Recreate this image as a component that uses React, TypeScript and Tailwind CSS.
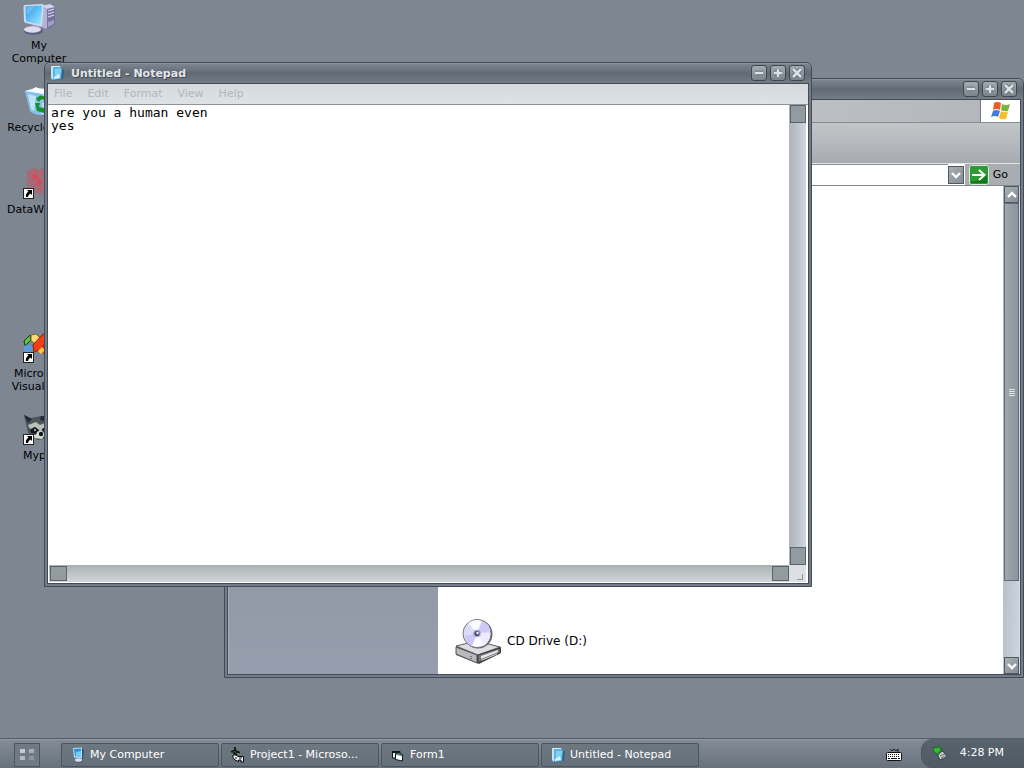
import React, { useState } from "react";

const raised =
  "flex shrink-0 items-center justify-center border border-[#505862] bg-linear-to-br from-[#a9b0b5] to-[#858e95]";

function ComputerIcon() {
  return (
    <svg viewBox="0 0 32 32" className="size-8" aria-hidden="true">
      <defs>
        <linearGradient id="screen" x1="0" y1="0" x2="1" y2="1">
          <stop offset="0" stopColor="#2f8fe6" />
          <stop offset="0.55" stopColor="#67c6fa" />
          <stop offset="1" stopColor="#a5e8ff" />
        </linearGradient>
      </defs>
      <path d="M18 3 L27 1 L32 4 V22 L24 27 L18 24 Z" fill="#74729c" />
      <path d="M18 3 L27 1 L32 4 L24 6 Z" fill="#d2d2e8" />
      <path d="M18 4 L24 6 V26 L18 24 Z" fill="#b5b4d2" />
      <path d="M25 8 L31 6 M25 11 L31 9 M25 14 L31 12" stroke="#dcdcf2" strokeWidth="1.3" />
      <path d="M25 19 L31 17 V21 L25 24 Z" fill="#a09ec2" />
      <path d="M9 21 L16 23 L15 27 L9 26 Z" fill="#8f8eb4" />
      <ellipse cx="10.500" cy="28" rx="9.500" ry="3.800" fill="#5d5b80" />
      <ellipse cx="9.500" cy="26.500" rx="8.500" ry="3.200" fill="#dcdcee" />
      <path d="M2 2 L19 1 Q21 1 21 3 L19 22 Q19 24 17 23.500 L3 20 Q1 19.500 1 18 L0.500 4 Q0.500 2 2 2Z" fill="#c9dcf2" />
      <path d="M2.500 3.500 L19 2.500 L17.500 21.500 L3 18.500 Z" fill="url(#screen)" />
      <path d="M3 4 L12 3.500 L4 12 Z" fill="#8fd0f8" opacity=".55" />
    </svg>
  );
}

function SmallComputerIcon() {
  return (
    <svg viewBox="0 0 16 16" className="size-4" aria-hidden="true">
      <path d="M12 1 L14 3 L13 11 L11 12 Z" fill="#34506e" />
      <ellipse cx="9" cy="13.500" rx="4" ry="2.200" fill="#4d5478" />
      <ellipse cx="8.500" cy="13" rx="3.600" ry="1.800" fill="#dcdff2" />
      <path d="M3 1 L12 0.500 L12 11.500 L4 10.500 Z" fill="#b6dbf4" />
      <path d="M4 2 L11 1.500 L11 10 L5 9 Z" fill="#2f93dc" />
      <path d="M6 5 L11 4 L11 10 L6 9 Z" fill="#74cdf8" />
    </svg>
  );
}

function RecycleIcon() {
  return (
    <svg viewBox="0 0 32 32" className="size-8" aria-hidden="true">
      <path d="M2 6 L13 3 L30 5 L26 28 Q20 32 8 27 Z" fill="#b6dcf5" />
      <path d="M2 6 L20 9 L18 30 Q11 30 7 26 Z" fill="#86bfec" />
      <path d="M5 9 L13 11 L11 26 L8 24 Z" fill="#d9f2ff" opacity=".7" />
      <path d="M2 6 L13 3 L30 5 L20 9 Z" fill="#e8f8ff" />
      <path d="M8 5 L13 2 L18 5 L22 3 L25 6 L19 8 Z" fill="#fff" />
      <path d="M13 14 Q17 8 22 12 L23 10 L26 15 L20 17 L21 15 Q18 13 16 17Z M12 18 L17 18 L16 22 L21 23 V28 L14 26Z M26 17 L28 22 L24 26 V28 L21 25 L24 21 V23 L25 21Z" fill="#15912a" />
    </svg>
  );
}

function DataIcon() {
  return (
    <svg viewBox="0 0 32 32" className="size-8" aria-hidden="true">
      <path d="M4 4 L11 1 L15 3 L20 1 L27 4 L30 14 L26 25 L18 29 L11 26 L7 21 L3 19 Z" fill="#93747f" />
      <g stroke="#c25c6a" strokeWidth="1.6" fill="none">
        <path d="M5 6 L14 2 M4 10 L18 5 M6 15 L20 8 M9 20 L22 12 M12 25 L26 16" />
        <path d="M10 2 L12 8 M14 6 L16 14 M9 10 L12 18 M18 2 L22 12 M16 15 L19 24" />
      </g>
      <path d="M11 6 L14 9 L12 13 L9 11Z M16 12 L20 15 L17 19 L13 16Z" fill="#d9485c" />
    </svg>
  );
}

function StudioIcon() {
  return (
    <svg viewBox="0 0 32 32" className="size-8" aria-hidden="true">
      <path d="M1 10 L7 4 L8 9 L2 15 Z" fill="#52c634" stroke="#202c20" />
      <path d="M8 4 L13 3 L17 7 L13 13 L8 10 Z" fill="#ffd872" stroke="#7b672a" />
      <path d="M1 15 L6 13 L10 16 L6 23 L1 20Z" fill="#5a9be0" />
      <path d="M10 14 L20 3 L28 4 L17 19 L11 21 Z" fill="#f23e16" stroke="#84240f" />
      <path d="M17 19 L28 4 L31 10 L21 23 Z" fill="#d7260f" />
      <path d="M15 20 L18 23 L22 19 L19 16Z" fill="#ffc83c" />
    </svg>
  );
}

function RaccoonIcon() {
  return (
    <svg viewBox="0 0 32 32" className="size-8" aria-hidden="true">
      <path d="M1 2 L8 5 L18 3 L26 3 L31 1 L30 15 L25 25 L15 27 L5 20 Z" fill="#4c5558" />
      <path d="M1 2 L9 6 L5 10 Z M18 3 L30 4 L25 9 L17 7Z" fill="#202b36" />
      <path d="M5 12 L13 9 L17 12 L24 9 L29 13 L22 14 L17 18 L12 14 L7 16Z" fill="#b9c0b5" />
      <path d="M7 17 L12 14 L16 17 L13 21 L8 20Z M19 16 L24 13 L27 17 L22 21Z" fill="#13191c" />
      <path d="M14 19 L18 17 L22 21 L19 26 L12 25 L8 21 L13 22Z" fill="#d8ddd4" />
      <circle cx="18" cy="21" r="2.200" fill="#141414" />
      <circle cx="12" cy="17" r="1" fill="#cdd6dc" />
    </svg>
  );
}

function NotepadIcon() {
  return (
    <svg viewBox="0 0 16 16" className="size-4" aria-hidden="true">
      <path d="M12 3 L15 5 L14 14 L4 15.500 L3 14 Z" fill="#2d6183" />
      <path d="M2 1 L11 1 L13 4 L12 14 L4 15 L2 13 Z" fill="#5bb4e4" />
      <path d="M2 1 L4 2 L4 15 L2 13 Z" fill="#c2e6f8" />
      <path d="M6 4 L12 4 L11 11 L6 12 Z" fill="#82d0f4" />
      <path d="M5 12 L10 9 L11 13 L5 14Z" fill="#d4f3fc" />
      <path d="M3 1.500 H11" stroke="#d2effb" />
    </svg>
  );
}

function FlagIcon() {
  return (
    <svg viewBox="0 0 20 20" className="size-5" aria-hidden="true">
      <path d="M3 2 Q6 0 10 2 L9 9 Q5 7 2 9Z" fill="#ec5b2a" />
      <path d="M11 3 Q15 5 19 3 L17 10 Q13 11 10 9Z" fill="#79b43c" />
      <path d="M2 10 Q5 8 9 10 L7 16 Q4 14 0 16Z" fill="#3c7ed8" />
      <path d="M10 10 Q13 12 17 11 L15 18 Q11 19 8 17Z" fill="#f5bd26" />
    </svg>
  );
}

function CdDriveIcon() {
  return (
    <svg viewBox="0 0 48 48" className="size-12" aria-hidden="true">
      <path d="M2 29 L23 24 L47 30 V36 L25 47 L2 38 Z" fill="#55565a" />
      <path d="M2 29 L23 24 L46 30 L24 38 Z" fill="#dededf" stroke="#66676a" />
      <path d="M2 30 L23 38 V46 L2 37 Z" fill="#b8b9bb" stroke="#55565a" />
      <path d="M24 38 L46 31 V36 L24 46 Z" fill="#77787b" stroke="#37383b" />
      <path d="M27 39 L44 33 V35 L27 42 Z" fill="#e7e7e9" />
      <path d="M28 43 L43 37" stroke="#d5d5d8" />
      <path d="M17 39 V42" stroke="#333" strokeDasharray="1 1" />
      <circle cx="24" cy="17" r="14.500" fill="#66666e" />
      <circle cx="23" cy="16.500" r="14" fill="#dddcf8" stroke="#77767f" />
      <path d="M23 16.500 L14 6 Q21 1 28 4 Z M23 16.500 L31 28 Q25 31 18 29 Z" fill="#fbfbff" />
      <path d="M23 16.500 L28 4 Q35 6 36.500 14 Z M23 16.500 L18 29 Q11 26 10 19 Z" fill="#cdc9f8" />
      <path d="M23 16.500 L36.500 16 Q36 24 31 28Z" fill="#edecff" />
      <circle cx="23" cy="16.500" r="3.800" fill="#aaa8d0" />
      <circle cx="23" cy="16.500" r="2.500" fill="#4b4973" />
      <circle cx="23.500" cy="16" r="1.200" fill="#fff" />
    </svg>
  );
}

function ProjectIcon() {
  return (
    <svg viewBox="0 0 16 16" className="size-4" aria-hidden="true">
      <path d="M1 5 L5 3 L7 5 L10 5 M3 5 L7 8 M5 0 V4" fill="none" stroke="#0d1916" strokeWidth="1.800" />
      <path d="M6 2 L7 3 M9 4 L11 5" stroke="#2d8c55" />
      <path d="M3 8 L6 8 L8 9.500 H13.500 V15 H11 V13 H8.500 V14.500 L5 13 L3 11 Z" fill="#f2f2f2" stroke="#0c0c0c" />
      <path d="M9 11 H12 M6 10 V12" stroke="#111" />
    </svg>
  );
}

function FormIcon() {
  return (
    <svg viewBox="0 0 16 16" className="size-4" aria-hidden="true">
      <path d="M2.500 4.500 L10 4.500 V11 L2.500 11 Z" fill="#e8eef0" stroke="#101820" />
      <path d="M2 4 L10 4 V6 H2Z" fill="#101820" />
      <path d="M5.500 6.500 L12.500 7.500 V14 L5.500 12.500 Z" fill="#fff" stroke="#101820" />
      <path d="M6 7.500 L12 8.500" stroke="#3b7f90" />
    </svg>
  );
}

function Chevron({ up = false }: { up?: boolean }) {
  return (
    <svg viewBox="0 0 10 8" className="h-2 w-2.5" aria-hidden="true">
      <path d={up ? "M1 6 L5 2 L9 6" : "M1 2 L5 6 L9 2"} fill="none" stroke="#fff" strokeWidth="2.400" />
    </svg>
  );
}

function CaptionButtons() {
  const marks = [
    { label: "Minimize", d: "M4 8 H12" },
    { label: "Maximize", d: "M4 8 H12 M8 4 V12" },
    { label: "Close", d: "M4 4 L12 12 M12 4 L4 12" },
  ];
  return (
    <div className="flex gap-[3px]">
      {marks.map((m) => (
        <button
          key={m.label}
          aria-label={m.label}
          className="size-4 rounded-[3px] border border-[#3f4750] bg-linear-to-b from-[#a5abb1] to-[#7b838b]"
        >
          <svg viewBox="1 1 14 14" className="size-full" aria-hidden="true">
            <path d={m.d} stroke="#666e77" strokeWidth="4.500" />
            <path d={m.d} stroke="#dde1e4" strokeWidth="2.500" />
          </svg>
        </button>
      ))}
    </div>
  );
}

function Frame({
  label,
  title,
  className,
  children,
}: {
  label: string;
  title?: React.ReactNode;
  className: string;
  children: React.ReactNode;
}) {
  return (
    <section
      aria-label={label}
      className={`absolute flex flex-col rounded-t-md border border-[#434b57] bg-[#737c88] ${className}`}
    >
      <header className="flex h-5 shrink-0 items-center justify-between rounded-t-[5px] border-t border-[#8c959f] bg-linear-to-b from-[#7c858f] via-[#626a73] to-[#747c85] pr-1.5 pb-px pl-1">
        <div className="flex items-center gap-1.5">{title}</div>
        <CaptionButtons />
      </header>
      <div className="mx-0.5 mb-0.5 flex min-h-0 flex-1 flex-col border border-[#434b57]">{children}</div>
    </section>
  );
}

function Explorer() {
  return (
    <Frame label="My Computer" className="top-[78px] right-0 bottom-[60px] left-56">
      <div className="flex h-[23px] shrink-0 border-b border-[#858b90] bg-linear-to-r from-[#bfc4c7] via-[#c4c8cb] to-[#b2b6ba]">
        <div className="flex-1" />
        <div className="flex w-10 items-center justify-center border-l border-[#737a80] bg-white">
          <FlagIcon />
        </div>
      </div>
      <div className="h-[41px] shrink-0 border-b border-[#e2e4e5] bg-linear-to-b from-[#c3c6c9] to-[#a7abb0]" />
      <div className="flex h-[22px] shrink-0 items-center border-b border-[#82888d] bg-[#a9adb1] pr-3">
        <input aria-label="Address" className="h-full min-w-0 flex-1 border-t border-[#888e94] bg-white px-1 outline-none" />
        <div className="flex h-full items-center bg-white pr-px">
          <button aria-label="Show addresses" className={`${raised} h-[18px] w-4`}>
            <Chevron />
          </button>
        </div>
        <button className="ml-1 flex items-center gap-1">
          <svg viewBox="0 0 20 20" className="size-5" aria-hidden="true">
            <rect x="0.500" y="0.500" width="19" height="19" rx="2" fill="#2c9b36" stroke="#dcebdc" />
            <path d="M2 18 H18 V10 Q11 17 2 16Z" fill="#13791f" />
            <path d="M3 10 H15 M10 5 L15.500 10 L10 15" fill="none" stroke="#fff" strokeWidth="2" />
          </svg>
          Go
        </button>
      </div>
      <div className="flex min-h-0 flex-1 bg-white">
        <aside className="w-[210px] shrink-0 border-l border-[#a5acb8] bg-linear-to-b from-[#7e8693] to-[#969dac]" />
        <main className="flex min-w-0 flex-1 flex-col justify-end px-4 pb-[9px]">
          <button className="flex items-center gap-[5px] self-start text-xs">
            <CdDriveIcon />
            CD Drive (D:)
          </button>
        </main>
        <div className="flex w-[17px] shrink-0 flex-col border-r border-[#d5dade] bg-linear-to-br from-[#adb2b5] to-[#ced5df] pl-px">
          <button aria-label="Scroll up" className={`${raised} h-[17px]`}>
            <Chevron up />
          </button>
          <div className="flex h-[378px] flex-col items-center justify-center gap-px border border-[#626b74] bg-linear-to-r from-[#a0a8ad] to-[#8b949d]">
            <span className="h-px w-1.5 bg-[#e1e5e8]" />
            <span className="h-px w-1.5 bg-[#e1e5e8]" />
            <span className="h-px w-1.5 bg-[#e1e5e8]" />
            <span className="h-px w-1.5 bg-[#e1e5e8]" />
          </div>
          <div className="flex-1" />
          <button aria-label="Scroll down" className={`${raised} h-[17px]`}>
            <Chevron />
          </button>
        </div>
      </div>
    </Frame>
  );
}

function Notepad() {
  const [text, setText] = useState("are you a human even\nyes");
  const thumb = "h-[18px] w-4 shrink-0 border border-[#59636a] bg-[#929b9f]";
  return (
    <Frame
      label="Notepad"
      className="top-[62px] right-[212px] bottom-[151px] left-11"
      title={
        <>
          <NotepadIcon />
          <h1 className="font-bold text-[#e3e6e9] [text-shadow:1px_1px_#414952]">Untitled - Notepad</h1>
        </>
      }
    >
      <nav className="flex h-[21px] shrink-0 items-center gap-[15px] border-b border-[#8e9498] bg-linear-to-b from-[#d4dadd] to-[#dce2e5] px-1.5 pb-0.5 text-[#b2b8bc] [text-shadow:1px_1px_#f6f8f9]">
        {["File", "Edit", "Format", "View", "Help"].map((item) => (
          <button key={item}>{item}</button>
        ))}
      </nav>
      <div className="flex min-h-0 flex-1 flex-col border-r-2 border-b border-l border-white bg-white">
        <div className="flex min-h-0 flex-1">
          <textarea
            aria-label="Document text"
            value={text}
            onChange={(e) => setText(e.target.value)}
            spellCheck={false}
            className="min-w-0 flex-1 resize-none overflow-hidden bg-white px-0.5 pt-px font-['DejaVu_Sans_Mono',monospace] text-[13px] leading-[13px] text-black outline-none"
          />
          <div className="flex w-[17px] flex-col items-center justify-between bg-linear-to-r from-[#afb5b8] via-[#bdc2cc] to-[#d2d8e3]">
            <button aria-label="Scroll up" className={thumb} />
            <button aria-label="Scroll down" className={thumb} />
          </div>
        </div>
        <div className="flex h-[17px] shrink-0">
          <div className="flex flex-1 items-center justify-between bg-linear-to-b from-[#abb1b3] to-[#d0d6d9] pl-px">
            <button aria-label="Scroll left" className="h-[15px] w-[17px] border border-[#59636a] bg-[#929b9f]" />
            <button aria-label="Scroll right" className="h-[15px] w-[17px] border border-[#59636a] bg-[#929b9f]" />
          </div>
          <div className="flex w-[17px] items-end justify-end bg-[#dce0e6] pr-[3px] pb-0.5">
            <span className="size-1.5 border-r border-b border-[#8b929b]" />
          </div>
        </div>
      </div>
    </Frame>
  );
}

const shortcuts = [
  { name: "My Computer", icon: <ComputerIcon />, linked: false },
  { name: "Recycle Bin", icon: <RecycleIcon />, linked: false },
  { name: "DataWizard", icon: <DataIcon />, linked: true },
  null,
  { name: "Microsoft Visual C...", icon: <StudioIcon />, linked: true },
  { name: "Mypic", icon: <RaccoonIcon />, linked: true },
];

const tasks = [
  { name: "My Computer", icon: <SmallComputerIcon /> },
  { name: "Project1 - Microso...", icon: <ProjectIcon /> },
  { name: "Form1", icon: <FormIcon /> },
  { name: "Untitled - Notepad", icon: <NotepadIcon /> },
];

export default function App() {
  return (
    <div className="flex min-h-screen flex-col bg-[#7e8692] font-['DejaVu_Sans',sans-serif] text-[11px] leading-[13px] text-black">
      <div className="relative flex-1 overflow-hidden">
        <div className="grid w-[78px] auto-rows-[82px] pt-[3px]">
          {shortcuts.map((s, i) =>
            s ? (
              <button key={s.name} className="flex flex-col items-center gap-1 self-start">
                <span className="relative">
                  {s.icon}
                  {s.linked && (
                    <svg viewBox="0 0 11 11" className="absolute bottom-0 left-0 size-[11px]" aria-hidden="true">
                      <rect x="0.500" y="0.500" width="10" height="10" fill="#fff" stroke="#222" />
                      <path d="M4 2 H9 V7 L7.500 5.500 Q5 7 5 9 H3 Q2 6 5.500 3.500Z" fill="#000" />
                    </svg>
                  )}
                </span>
                <span className="max-w-[70px]">{s.name}</span>
              </button>
            ) : (
              <span key={i} />
            ),
          )}
        </div>
        <Explorer />
        <Notepad />
      </div>
      <footer className="flex h-[30px] shrink-0 border-t border-[#535d69] bg-linear-to-b from-[#848d96] to-[#68727c]">
        <div className="flex flex-1 items-center border-t border-[#929ba4] pt-px pl-3.5">
          <button
            aria-label="Start"
            className="mr-[21px] grid h-6 w-[26px] grid-cols-2 place-content-center justify-items-center gap-[3px] border border-[#4b5661] bg-[#707a84] px-1"
          >
            <span className="h-1 w-[5px] bg-[#c6ccd1]" />
            <span className="h-1 w-[5px] bg-[#a9b1b8]" />
            <span className="h-1 w-[5px] bg-[#b3bbc1]" />
            <span className="h-1 w-[5px] bg-[#8b969f]" />
          </button>
          <div className="flex gap-0.5">
            {tasks.map((t) => (
              <button
                key={t.name}
                className="flex h-6 w-[158px] items-center gap-1 rounded-xs border border-[#485460] bg-linear-to-b from-[#6c777f] to-[#65707a] pl-2 text-white"
              >
                {t.icon}
                {t.name}
              </button>
            ))}
          </div>
          <svg viewBox="0 0 16 14" className="mr-[19px] ml-auto h-3.5 w-4" aria-hidden="true">
            <path d="M4 1 L6 3 L8 1 L10 3 L12 1 V4" fill="none" stroke="#161b20" />
            <rect x="0.500" y="4.500" width="15" height="8" rx="1" fill="#fff" stroke="#111" />
            <path d="M2 6.500 H14 M2 8.500 H14" stroke="#111" strokeDasharray="1 1" />
            <path d="M2 10.500 H4 M5 10.500 H11 M12 10.500 H14" stroke="#111" />
          </svg>
        </div>
        <div className="flex items-center gap-3 rounded-l-xl border-l border-[#49545f] bg-linear-to-b from-[#59636d] to-[#4f5a65] pr-5 pb-0.5 pl-2.5 text-white">
          <svg viewBox="0 0 16 16" className="size-4" aria-hidden="true">
            <path d="M5 9 L11 6 L15 12 L8 15 Z" fill="#c9cec9" stroke="#343c42" />
            <path d="M8 11 L12 9 M9 13 L13 11" stroke="#60686c" />
            <path d="M1 2 L4 3 L8 1 L8 4 L11 5 L7 7 L7 10 L4 8 L2 7Z" fill="#35bb31" stroke="#1b6a27" />
          </svg>
          <time>4:28 PM</time>
        </div>
      </footer>
    </div>
  );
}
